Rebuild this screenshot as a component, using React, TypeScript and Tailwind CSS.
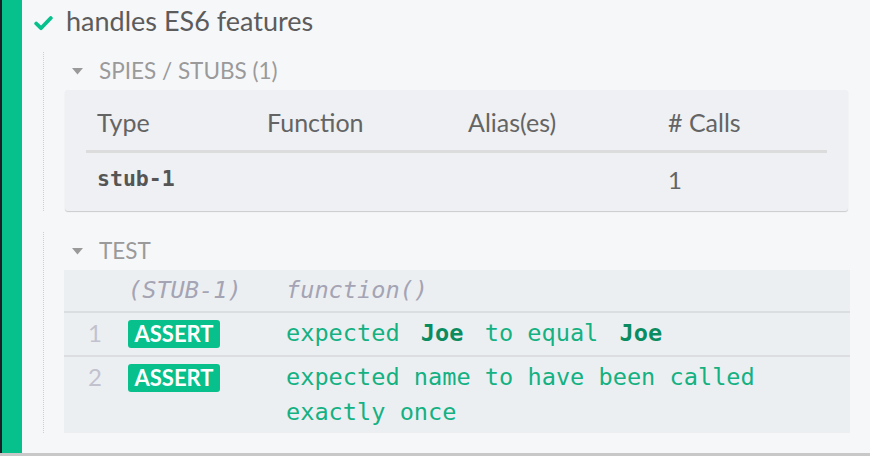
const sans = "font-['Lato','Noto_Sans',sans-serif]";
const mono = "font-['DejaVu_Sans_Mono','Liberation_Mono',monospace]";

function Caret() {
  return (
    <svg width="11" height="7" viewBox="0 0 11 7" className="mr-[16px]">
      <path d="M0 0 L11 0 L5.5 6.5 Z" fill="#9a9a9a" />
    </svg>
  );
}

function Assert() {
  return (
    <span
      className={`${sans} flex h-[28px] w-[92px] items-center justify-center rounded-[3px] bg-[#08c08b] text-[22px] leading-none font-bold text-white`}
    >
      ASSERT
    </span>
  );
}

export default function App() {
  return (
    <div className="flex h-[456px] w-[870px] border-b-[3px] border-[#c8c8c8] bg-[#f6f7f9]">
      <div className="w-[2px] bg-[#1c1f26]" />
      <div className="w-[20px] bg-[#06c18c]" />

      <div className="flex-1">
        {/* Test title */}
        <div className="flex h-[52px] items-start pt-[5px]">
          <svg width="19" height="16" viewBox="0 0 19 16" className="ml-[12px] mt-[10px]">
            <path d="M2.2 8.5 L7 13.2 L16.8 3" fill="none" stroke="#06c18c" strokeWidth="3.8" strokeLinecap="round" strokeLinejoin="round" />
          </svg>
          <span className={`${sans} ml-[13px] text-[27px] leading-[32px] text-[#5c5c5c]`}>handles ES6 features</span>
        </div>

        {/* Spies / stubs */}
        <div className="ml-[21px] border-l border-dotted border-[#cfcfcf]">
          <div className="flex h-[38px] items-center pl-[28px]">
            <Caret />
            <span className={`${sans} text-[22.5px] text-[#9a9a9a]`}>SPIES / STUBS (1)</span>
          </div>
          <div className="ml-[21px] mr-[22px] rounded-[3px] bg-[#eef0f3] px-[21px] shadow-[0_1px_1px_rgba(0,0,0,0.18)]">
            <div className={`${sans} flex h-[63px] items-center border-b-[3px] border-[#dcdcdc] pt-[5px] text-[25px] text-[#646464]`}>
              <div className="w-[181px] pl-[11px]">Type</div>
              <div className="w-[201px]">Function</div>
              <div className="w-[200px]">Alias(es)</div>
              <div className="flex-1"># Calls</div>
            </div>
            <div className="flex h-[58px] items-center pb-[5px] text-[#555]">
              <div className={`${mono} w-[181px] pl-[11px] text-[21.5px] font-bold`}>stub-1</div>
              <div className="w-[201px]" />
              <div className="w-[200px]" />
              <div className={`${sans} flex-1 text-[24px] text-[#646464]`}>1</div>
            </div>
          </div>
        </div>

        {/* Test body */}
        <div className="ml-[21px] mt-[21px] border-l border-dotted border-[#cfcfcf]">
          <div className="flex h-[38px] items-center pl-[28px]">
            <Caret />
            <span className={`${sans} text-[22.5px] text-[#9a9a9a]`}>TEST</span>
          </div>
          <div className={`${mono} ml-[20px] mr-[20px] bg-[#eceff2] text-[23.6px]`}>
            <div className="flex h-[43px] items-center border-b-2 border-[#dcdde0] italic text-[#a4a4b4]">
              <div className="w-[64px]" />
              <div className="w-[158px]">(STUB-1)</div>
              <div>function()</div>
            </div>
            <div className="flex h-[44px] border-b-2 border-[#dcdde0] pt-[3px] leading-[35px]">
              <div className={`${sans} w-[38px] text-right text-[24px] leading-[33px] text-[#c2c2cf]`}>1</div>
              <div className="w-[26px]" />
              <div className="w-[158px] pt-[4px]">
                <Assert />
              </div>
              <div className="text-[#14b182]">
                expected <span className="ml-[7px] mr-[7px] font-bold text-[#0b8c60]">Joe</span> to equal{' '}
                <span className="ml-[7px] font-bold text-[#0b8c60]">Joe</span>
              </div>
            </div>
            <div className="flex h-[76px] pt-[3px] leading-[35px]">
              <div className={`${sans} w-[38px] text-right text-[24px] leading-[33px] text-[#c2c2cf]`}>2</div>
              <div className="w-[26px]" />
              <div className="w-[158px] pt-[4px]">
                <Assert />
              </div>
              <div className="w-[500px] text-[#14b182]">
                expected name to have been called
                <br />
                exactly once
              </div>
            </div>
          </div>
        </div>
      </div>
    </div>
  );
}
